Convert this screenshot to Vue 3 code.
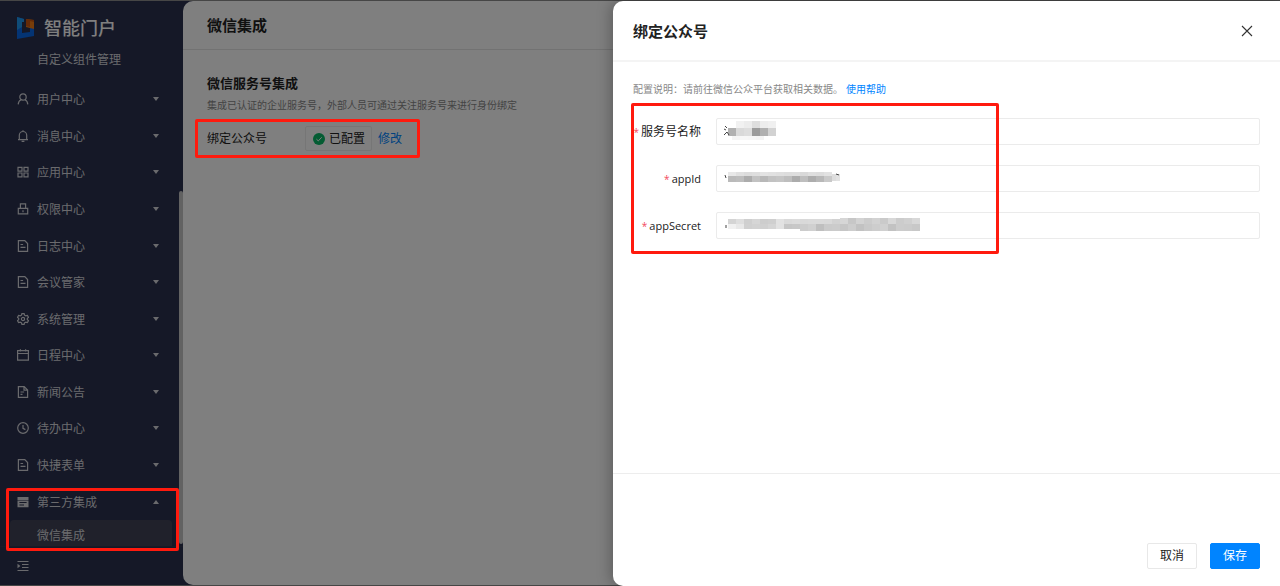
<script setup>
import { ref } from 'vue'

const menu = [
  { name: '用户中心', icon: 'user' },
  { name: '消息中心', icon: 'bell' },
  { name: '应用中心', icon: 'grid' },
  { name: '权限中心', icon: 'lock' },
  { name: '日志中心', icon: 'doc' },
  { name: '会议管家', icon: 'doc' },
  { name: '系统管理', icon: 'gear' },
  { name: '日程中心', icon: 'calendar' },
  { name: '新闻公告', icon: 'news' },
  { name: '待办中心', icon: 'clock' },
  { name: '快捷表单', icon: 'doc' },
  { name: '第三方集成', icon: 'server', open: true },
]

const icons = {
  user: 'M6 .8a3.2 3.2 0 1 1 0 6.4a3.2 3.2 0 1 1 0-6.4M1.2 11.4c.1-2.2 1-3.8 2.9-4.7M10.8 11.4c-.1-2.2-1-3.8-2.9-4.7',
  bell: 'M1 9.6h10M2.3 9.4V5.2a3.7 3.7 0 0 1 7.4 0v4.2M6 1.4V.3M4.6 11.4h2.8',
  grid: 'M1 1.3h4v3.8H1zM7 1.3h4v3.8H7zM1 7h4v3.8H1zM7 7h4v3.8H7z',
  lock: 'M1.3 5.3h9.4v5.6H1.3zM3.4 5V.9h5.2V5M6 7.2v2',
  doc: 'M1.4.7h6.4l2.8 2.8v7.8H1.4zM3.5 4.5h2.6M3.5 7.4h5',
  gear: 'M4.9.6h2.2l.4 1.6 1.3.7 1.6-.5 1.1 1.9-1.2 1.1v1.2l1.2 1.1-1.1 1.9-1.6-.5-1.3.7-.4 1.6H4.9l-.4-1.6-1.3-.7-1.6.5L.5 7.7l1.2-1.1V5.4L.5 4.3l1.1-1.9 1.6.5 1.3-.7zM6 4.4a1.6 1.6 0 1 1 0 3.2a1.6 1.6 0 1 1 0-3.2',
  calendar: 'M.6 1.6h10.8v9.6H.6zM.6 4.5h10.8M3.4.2v2.4M8.6.2v2.4',
  news: 'M1.4.7h5.8l3.4 3.2v7.4H1.4zM7 1v3.1h3.4M3.5 6h3.6M3.5 8.4h2',
  clock: 'M6 .7a5.3 5.3 0 1 1 0 10.6a5.3 5.3 0 1 1 0-10.6M6 3v3.4l2.4 1.2',
}

// Pixel blocks that conceal the stored credentials: one row is [x, y, height, step, shades]
const fields = ref([
  {
    id: 'name', label: '服务号名称', value: '',
    mosaic: [
      [20, 3, 7, 8, ['#f1f1f1', '#ececec', '#dedede', '#ededed', '#f0f0f0']],
      [12, 10, 8, 8, ['#b0b0b0', '#d9d9d9', '#dddddd', '#9b9b9b', '#b0b0b0', '#d2d2d2']],
      [16, 18, 4, 8, ['#f4f4f4', '#f7f7f7', '#f6f6f6', '#f4f4f4']],
    ],
    ink: 'M9 8l2 2M10 12l-2-1M8 17l3-3 2 3',
  },
  {
    id: 'appId', label: 'appId', value: '', latin: true,
    mosaic: [
      [12, 7, 4, 8, ['#e8e8e8', '#e0e0e0', '#dcdcdc', '#dedede', '#e3e3e3', '#e1e1e1', '#dfdfdf', '#dddddd', '#dedede', '#d9d9d9', '#dfdfdf', '#dddddd', '#e2e2e2']],
      [12, 11, 6, 8, ['#bababa', '#bdbdbd', '#acacac', '#c2c2c2', '#b8b8b8', '#c2c2c2', '#c5c5c5', '#bebebe', '#acacac', '#bebebe', '#adadad', '#b8b8b8', '#c9c9c9']],
      [116, 9, 7, 4, ['#dddddd', '#e2e2e2']],
    ],
    ink: 'M9 10l1 3M120 9l3 1',
  },
  {
    id: 'appSecret', label: 'appSecret', value: '', latin: true,
    mosaic: [
      [12, 7, 5, 8, ['#d4d4d4', '#dedede', '#cfcfcf', '#d6d6d6', '#cdcdcd', '#cfcfcf', '#e2e2e2', '#dadada', '#dcdcdc', '#d9d9d9', '#dadada', '#dadada', '#d9d9d9', '#d2d2d2', '#d6d6d6', '#c7c7c7', '#d3d3d3', '#cccccc', '#d2d2d2', '#cacaca', '#d8d8d8', '#cccccc', '#d0d0d0', '#d8d8d8']],
      [124, 6, 1, 8, ['#d6d6d6', '#c7c7c7', '#d3d3d3', '#cccccc', '#d2d2d2', '#cacaca', '#d8d8d8', '#cccccc', '#d0d0d0', '#d8d8d8']],
      [12, 12, 5, 8, ['#f0f0f0', '#e8e8e8', '#d0d0d0', '#d2d2d2', '#d0d0d0', '#d5d5d5', '#e2e2e2', '#c6c6c6', '#c8c8c8', '#cccccc', '#d0d0d0', '#bfbfbf', '#cacaca', '#cbcbcb', '#c6c6c6', '#cdcdcd', '#c2c2c2', '#c9c9c9', '#cdcdcd', '#d0d0d0', '#c2c2c2', '#cccccc', '#cbcbcb', '#c8c8c8']],
      [84, 17, 2, 8, ['#cccccc', '#d0d0d0', '#bfbfbf', '#cacaca', '#cbcbcb', '#c6c6c6', '#cdcdcd', '#c2c2c2', '#c9c9c9', '#cdcdcd', '#d0d0d0', '#c2c2c2', '#cccccc', '#cbcbcb', '#c8c8c8']],
    ],
    ink: 'M10 13v3',
  },
])
</script>

<template>
  <div class="page">
    <aside class="sidebar">
      <div class="brand">
        <svg class="logo" viewBox="0 0 20 24" aria-hidden="true">
          <path d="M1 1l7 2v3H6v11l8-1v-4h4v8L1 23z" fill="#0868e8" />
          <path d="M1 1l7 2v3H6v5L1 14z" fill="#1f98f0" />
          <path d="M10 3l8 1v9l-4-1-4-1z" fill="#f07a12" />
          <path d="M10 3l8 1v2l-4-1v6l-4-1z" fill="#c95510" />
        </svg>
        <span>智能门户</span>
      </div>
      <a class="sub" href="#widgets">自定义组件管理</a>
      <nav class="menu">
        <button v-for="m in menu" :key="m.name" type="button" class="item">
          <svg class="icon" viewBox="0 0 12 12" aria-hidden="true">
            <template v-if="m.icon === 'server'">
              <path d="M.5 1h11v3H.5zM.5 4.6h11v6.6H.5z" fill="currentColor" />
              <path d="M2.4 6.5h7.2M2.4 9h4.6" stroke="#2a304f" />
            </template>
            <path v-else :d="icons[m.icon]" fill="none" stroke="currentColor" stroke-width="1.2" />
          </svg>
          <span>{{ m.name }}</span>
          <i class="arrow" :class="{ up: m.open }"></i>
        </button>
      </nav>
      <a class="sub current" href="#wechat">微信集成</a>
      <footer class="collapse">
        <button type="button" aria-label="收起菜单">
          <svg class="icon" viewBox="0 0 12 12" aria-hidden="true">
            <path d="M.5 1.5h11M5 4.5h6.5M5 7.5h6.5M.5 10.5h11" stroke="currentColor" />
            <path d="M.5 3.8L3.4 6 .5 8.2z" fill="currentColor" />
          </svg>
        </button>
      </footer>
      <div class="scrollbar"></div>
    </aside>

    <main class="main">
      <header class="main-head"><h1>微信集成</h1></header>
      <section class="content">
        <h2>微信服务号集成</h2>
        <p>集成已认证的企业服务号，外部人员可通过关注服务号来进行身份绑定</p>
        <div class="binding">
          <span class="binding-name">绑定公众号</span>
          <span class="status">
            <svg viewBox="0 0 12 12" aria-hidden="true">
              <circle cx="6" cy="6" r="6" fill="#08b866" />
              <path d="M3.4 6.1l1.9 1.8 3.4-3.6" fill="none" stroke="#fff" />
            </svg>
            已配置
          </span>
          <a href="#edit">修改</a>
        </div>
      </section>
    </main>

    <div class="mask"></div>

    <section class="drawer" role="dialog" aria-labelledby="drawer-title">
      <header class="drawer-head">
        <h2 id="drawer-title">绑定公众号</h2>
        <button type="button" class="close" aria-label="关闭">
          <svg viewBox="0 0 12 12" aria-hidden="true">
            <path d="M1 1l10 10M11 1L1 11" stroke="#333" stroke-width="1.1" />
          </svg>
        </button>
      </header>
      <form id="bind" class="drawer-body" @submit.prevent>
        <p class="hint">配置说明：请前往微信公众平台获取相关数据。<a href="#help">使用帮助</a></p>
        <div v-for="f in fields" :key="f.id" class="field">
          <label :for="f.id" :class="{ latin: f.latin }"><b>*</b>{{ f.label }}</label>
          <div class="control">
            <input :id="f.id" v-model="f.value" type="text" />
            <svg class="mosaic" width="210" height="27" aria-hidden="true" shape-rendering="crispEdges">
              <template v-for="(row, r) in f.mosaic" :key="r">
                <rect
                  v-for="(shade, c) in row[4]" :key="c"
                  :x="row[0] + c * row[3]" :y="row[1]" :width="row[3]" :height="row[2]" :fill="shade"
                />
              </template>
              <path :d="f.ink" fill="none" stroke="#444" shape-rendering="auto" />
            </svg>
          </div>
        </div>
      </form>
      <footer class="drawer-foot">
        <button type="button" class="btn">取消</button>
        <button type="submit" form="bind" class="btn primary">保存</button>
      </footer>
      <div class="marker marker-form"></div>
    </section>

    <div class="marker marker-menu"></div>
    <div class="marker marker-binding"></div>
  </div>
</template>

<style>
body {
  margin: 0;
}
</style>

<style scoped>
* {
  box-sizing: border-box;
}
.page {
  position: relative;
  display: flex;
  min-height: 100vh;
  padding: 1px 0;
  overflow: hidden;
  background: #2a304f;
  box-shadow: inset 0 1px #8c8c8c, inset 0 -1px #8c8c8c;
  font-family: "Open Sans", "Noto Sans CJK SC", sans-serif;
  font-size: 12px;
  line-height: 18px;
  color: #222;
}
h1, h2, p {
  margin: 0;
}
a {
  color: #0084ff;
  text-decoration: none;
}
button {
  font: inherit;
  cursor: pointer;
}

.sidebar {
  position: relative;
  display: flex;
  flex-direction: column;
  flex: none;
  width: 183px;
  color: #d4d5da;
}
.brand {
  display: flex;
  align-items: center;
  gap: 8px;
  height: 48px;
  padding: 6px 16px 0;
  font-size: 18px;
  font-weight: 500;
  color: #fff;
}
.logo {
  width: 20px;
  height: 24px;
}
.sub {
  display: flex;
  align-items: center;
  color: inherit;
  height: 26px;
  padding-left: 37px;
}
.brand + .sub {
  height: 22px;
  margin-bottom: 10px;
}
.sub.current {
  margin: 0 11px 0 10px;
  padding-left: 27px;
  border-radius: 4px 4px 0 0;
  background: #404357;
  padding-top: 6px;
}
.menu {
  display: flex;
  flex-direction: column;
  flex: 1;
}
.item {
  display: flex;
  align-items: center;
  flex: 1;
  gap: 8px;
  padding: 0 24px 0 17px;
  border: 0;
  background: none;
  color: inherit;
}
.item span {
  padding-top: 2px;
}
.icon {
  display: block;
  flex: none;
  width: 12px;
  height: 12px;
}
.arrow {
  margin-left: auto;
  border: 3px solid transparent;
  border-top: 4px solid currentColor;
  border-bottom: 0;
}
.arrow.up {
  border-top: 0;
  border-bottom: 4px solid currentColor;
}
.collapse {
  display: flex;
  align-items: center;
  height: 39px;
  padding-left: 17px;
  border-top: 1px solid #32374f;
}
.collapse button {
  padding: 0;
  border: 0;
  background: none;
  color: inherit;
}
.scrollbar {
  position: absolute;
  top: 190px;
  right: 0;
  bottom: 41px;
  width: 4px;
  border-radius: 2px;
  background: #c4c4c4;
}

.main {
  flex: 1;
  border-radius: 10px 0 0 10px;
  background: #fff;
}
.main-head {
  display: flex;
  align-items: center;
  height: 49px;
  padding-left: 24px;
  border-bottom: 1px solid #e4e4e4;
}
h1 {
  font-size: 15px;
  font-weight: 700;
}
.content {
  padding: 24px;
}
.content h2 {
  margin-bottom: 4px;
  font-size: 13px;
  line-height: 18px;
}
.content p {
  font-size: 10px;
  color: #888;
}
.binding {
  display: flex;
  align-items: center;
  height: 25px;
  margin-top: 12px;
}
.binding-name {
  width: 98px;
}
.status {
  display: flex;
  align-items: center;
  gap: 4px;
  height: 25px;
  margin-right: 6px;
  padding: 0 6px 0 7px;
  border: 1px solid #ececec;
  border-radius: 2px;
}
.status svg {
  width: 12px;
  height: 12px;
}

.mask {
  position: absolute;
  inset: 0;
  background: rgba(0, 0, 0, 0.5);
}

.drawer {
  position: absolute;
  top: 1px;
  right: 0;
  bottom: 0;
  display: flex;
  flex-direction: column;
  width: 667px;
  max-width: 100%;
  border-radius: 10px 0 0 10px;
  background: #fff;
  box-shadow: -3px 0 14px rgba(0, 0, 0, 0.25);
}
.drawer-head {
  display: flex;
  align-items: center;
  justify-content: space-between;
  height: 61px;
  padding: 0 27px 0 20px;
  border-bottom: 2px solid #f4f4f4;
}
.drawer-head h2 {
  font-size: 15px;
}
.close {
  padding: 0;
  border: 0;
  background: none;
}
.close svg {
  display: block;
  width: 12px;
  height: 12px;
}
.drawer-body {
  display: flex;
  flex-direction: column;
  flex: 1;
  gap: 20px;
  padding: 18px 20px;
}
.hint {
  font-size: 10px;
  color: #888;
}
.hint a {
  margin-left: 3px;
}
.field {
  display: flex;
  align-items: center;
}
label {
  flex: none;
  width: 68px;
  margin-right: 15px;
  text-align: right;
  white-space: nowrap;
}
label.latin {
  font-size: 11px;
}
label b {
  margin-right: 2px;
  font-size: 10px;
  font-weight: 400;
  color: #f2495c;
}
.control {
  position: relative;
  flex: 1;
}
input {
  display: block;
  width: 100%;
  height: 27px;
  padding: 0 8px;
  border: 1px solid #ebebeb;
  border-radius: 2px;
  font: inherit;
  color: inherit;
}
.mosaic {
  position: absolute;
  top: 0;
  left: 0;
  pointer-events: none;
}
.drawer-foot {
  display: flex;
  align-items: flex-end;
  justify-content: flex-end;
  gap: 13px;
  height: 113px;
  padding: 0 20px 17px;
  border-top: 1px solid #ededed;
}
.btn {
  width: 50px;
  height: 26px;
  padding: 0;
  border: 1px solid #e8e8e8;
  border-radius: 2px;
  background: #fff;
  color: #222;
}
.btn.primary {
  border-color: #0084ff;
  background: #0084ff;
  color: #fff;
}

.marker {
  position: absolute;
  border: 3px solid #ff1a0e;
  border-radius: 2px;
  pointer-events: none;
}
.marker-menu {
  left: 6px;
  bottom: 35px;
  width: 173px;
  height: 63px;
}
.marker-binding {
  top: 119px;
  left: 195px;
  width: 225px;
  height: 39px;
}
.marker-form {
  top: 102px;
  left: 18px;
  width: 368px;
  height: 151px;
}
</style>
